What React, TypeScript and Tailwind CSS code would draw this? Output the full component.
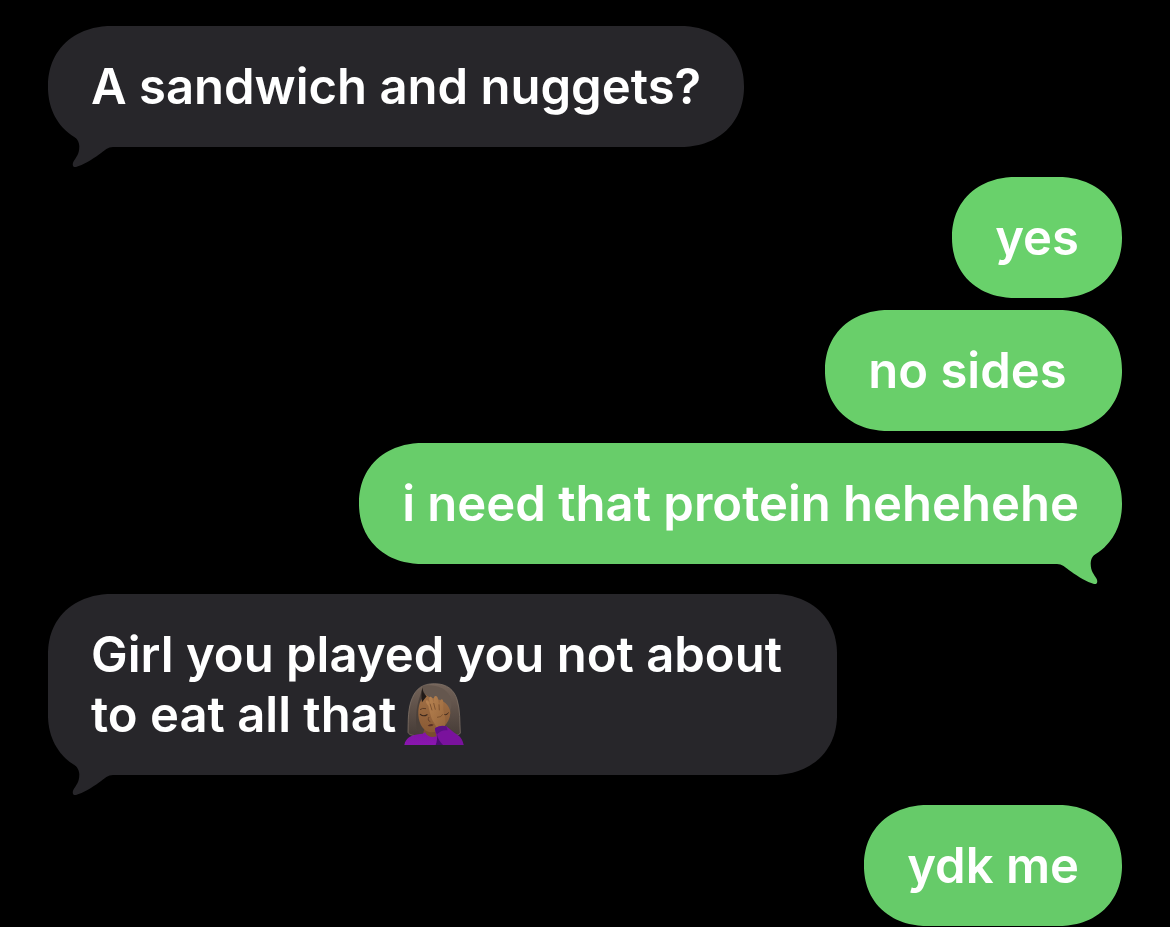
import clsx from "clsx";
import type { ReactNode } from "react";

interface Message {
  id: number;
  from: "me" | "them";
  body: ReactNode;
  fill: string;
}

// Woman facepalming, medium-dark skin tone
function FacepalmEmoji() {
  return (
    <svg
      role="img"
      aria-label="woman facepalming"
      viewBox="42 33 186 192"
      className="-my-4 ml-[7px] inline-block h-16 w-[62px] align-[2px]"
    >
      <defs>
        <linearGradient id="hair" x1="0" y1="0" x2="0" y2="1">
          <stop offset="0" stopColor="#74645a" />
          <stop offset="0.45" stopColor="#5f5149" />
          <stop offset="1" stopColor="#463c37" />
        </linearGradient>
        <linearGradient id="skin" x1="0" y1="0" x2="0" y2="1">
          <stop offset="0" stopColor="#a06f45" />
          <stop offset="1" stopColor="#8a5a34" />
        </linearGradient>
        <linearGradient id="hand" x1="0" y1="0" x2="1" y2="1">
          <stop offset="0" stopColor="#b98452" />
          <stop offset="1" stopColor="#95643a" />
        </linearGradient>
        <linearGradient id="shirt" x1="0" y1="0" x2="0" y2="1">
          <stop offset="0" stopColor="#8115a3" />
          <stop offset="1" stopColor="#8a16b0" />
        </linearGradient>
      </defs>
      <path
        d="M57 184C58 150 56 112 70 80C82 52 102 38 136 38C174 38 196 56 205 88C214 120 212 154 214 186C210 194 192 196 176 194H86C72 194 60 192 57 184Z"
        fill="url(#hair)"
        stroke="#8b7b6f"
        strokeWidth="2"
      />
      <path d="M100 50C94 76 84 96 82 130C80 156 82 176 92 190L112 180L100 90L116 70C108 66 102 60 100 50Z" fill="#4b403a" />
      <path d="M110 160H150V188L142 202H108L102 188Z" fill="#7a4e2e" />
      <path
        d="M110 70C94 84 87 104 88 132C90 160 104 182 126 184C154 184 182 158 184 126C184 104 176 92 164 86C142 80 122 78 110 70Z"
        fill="url(#skin)"
      />
      <path d="M100 46C100 62 108 74 126 80C150 84 176 90 184 120C196 88 180 54 142 46C124 42 110 42 100 46Z" fill="#65574e" />
      <path d="M101 49C100 60 105 70 113 76L99 94C97 80 96 64 101 49Z" fill="#211a18" />
      <path d="M93 116Q100 110 111 113" stroke="#5d3c26" strokeWidth="3" fill="none" />
      <path d="M94 130Q103 138 114 131" stroke="#38251b" strokeWidth="3.5" fill="none" strokeLinecap="round" />
      <path d="M162 128Q170 136 178 126" stroke="#38251b" strokeWidth="3" fill="none" strokeLinecap="round" />
      <path d="M120 138Q114 149 124 152" stroke="#68422a" strokeWidth="3" fill="none" />
      <path d="M116 164Q124 156 134 161Q128 169 116 164Z" fill="#582f27" />
      <path d="M46 222C50 202 66 192 88 190C98 190 104 188 108 184C114 196 128 202 142 196L190 206L224 222Z" fill="url(#shirt)" />
      <path
        d="M134 154C126 142 122 122 118 104C112 99 109 92 112 88C116 86 120 92 123 98C121 88 119 79 124 77C130 76 132 88 134 96C134 86 134 75 140 75C147 75 148 88 150 100C154 94 153 85 158 85C165 86 163 102 163 116C164 128 170 138 169 148C169 160 166 166 166 172L144 178C142 168 140 162 134 154Z"
        fill="url(#hand)"
      />
      <path d="M123 98L129 118M134 96L139 116M150 100L151 118M144 139Q158 139 161 130" stroke="#744b2b" strokeWidth="2.5" fill="none" />
      <path d="M138 172C148 166 160 164 172 166C182 174 192 184 206 192C216 198 222 210 224 222H160C148 210 140 194 138 172Z" fill="#7a129d" />
      <path d="M138 172C148 164 162 162 172 166L176 178C164 176 154 180 144 190C140 184 138 178 138 172Z" fill="#5c1084" />
      <path d="M144 190C146 204 154 214 162 222H140C144 212 145 202 144 190Z" fill="#4b0d70" />
    </svg>
  );
}

const groups: Message[][] = [
  [
    {
      id: 1,
      from: "them",
      body: "A sandwich and nuggets?",
      fill: "bg-[#27262a]",
    },
  ],
  [
    { id: 2, from: "me", body: "yes", fill: "bg-[#69d16b]" },
    { id: 3, from: "me", body: "no sides\u00a0", fill: "bg-[#69cf6a]" },
    { id: 4, from: "me", body: "i need that protein hehehehe", fill: "bg-[#68cd6a]" },
  ],
  [
    {
      id: 5,
      from: "them",
      body: (
        <>
          Girl you played you not about to eat all that
          <FacepalmEmoji />
        </>
      ),
      fill: "bg-[#27262a]",
    },
  ],
  [{ id: 6, from: "me", body: "ydk me", fill: "bg-[#66cb69]" }],
];

function Tail({ mine }: { mine: boolean }) {
  return (
    <svg
      aria-hidden="true"
      viewBox="0 0 50 36"
      className={clsx(
        "absolute -bottom-[21px] h-9 w-[50px]",
        mine ? "right-5 -scale-x-100 text-[#68cd6a]" : "left-5 text-[#27262a]"
      )}
    >
      <path
        d="M0 -2C5 3 11 7 11.3 14C11.5 22 8 25 5.3 30C4 33 5 35.5 8 35C15 33 24 27.5 31 22.5C37 18 40 15 45 15H50V-2Z"
        fill="currentColor"
      />
    </svg>
  );
}

function Bubble({ message, hasTail }: { message: Message; hasTail: boolean }) {
  const mine = message.from === "me";
  return (
    <li
      className={clsx(
        "relative max-w-[789px] rounded-[64px/60px] px-[43px] pt-[31px] pb-[30px] [corner-shape:superellipse(1.1)]",
        mine ? "self-end" : "self-start",
        message.fill
      )}
    >
      {hasTail && <Tail mine={mine} />}
      <p className="relative">{message.body}</p>
    </li>
  );
}

export default function App() {
  return (
    <main className="flex min-h-screen flex-col gap-[30px] bg-black px-12 pt-[26px] font-['Inter',sans-serif] text-[49px] leading-[60px] font-semibold text-white">
      {groups.map((group, g) => (
        <ul key={group[0].id} className="flex flex-col gap-3">
          {group.map((message, i) => (
            <Bubble
              key={message.id}
              message={message}
              hasTail={i === group.length - 1 && g < groups.length - 1}
            />
          ))}
        </ul>
      ))}
    </main>
  );
}
